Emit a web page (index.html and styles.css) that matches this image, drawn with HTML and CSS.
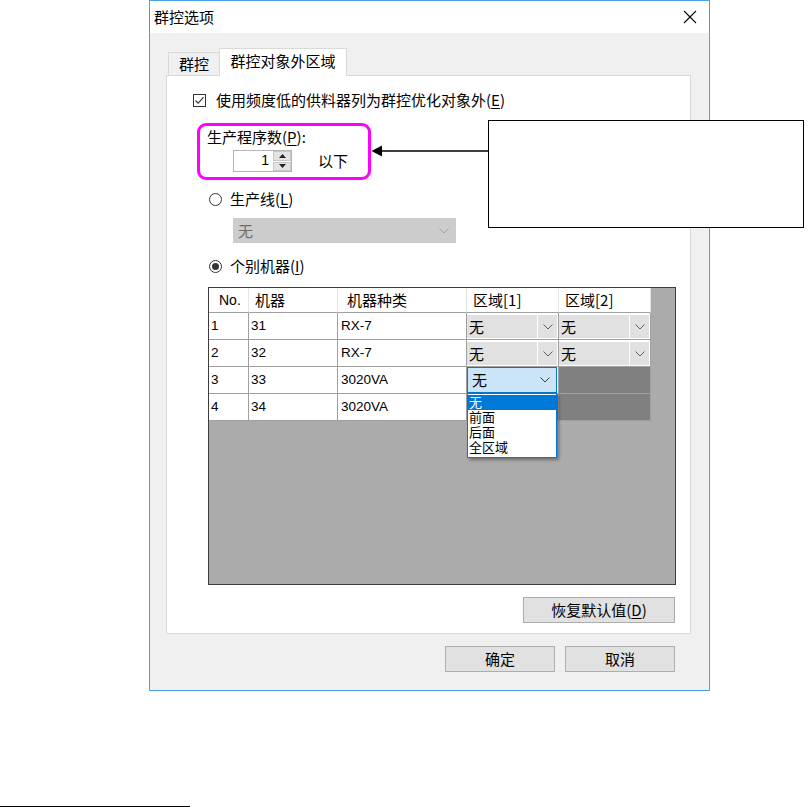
FILE: index.html
```html
<!DOCTYPE html>
<html lang="zh-CN">
<head>
<meta charset="utf-8">
<title>群控选项</title>
<link rel="stylesheet" href="styles.css">
</head>
<body>
<div class="page">
  <div class="window">
    <div class="titlebar">
      <span class="title">群控选项</span>
      <svg class="close" viewBox="0 0 14 14"><path d="M1 1 L13 13 M13 1 L1 13" stroke="#000" stroke-width="1.1" fill="none"/></svg>
    </div>
    <div class="client">
      <div class="tabs">
        <div class="tab">群控</div>
        <div class="tab active">群控对象外区域</div>
      </div>
      <div class="panel">
        <div class="chk-row">
          <svg class="checkbox" viewBox="0 0 13 13"><rect x="0.5" y="0.5" width="12" height="12" fill="#fff" stroke="#333"/><path d="M2.5 6.5 L5.2 9.2 L10.5 3.2" stroke="#333" stroke-width="1.1" fill="none"/></svg>
          <span>使用频度低的供料器列为群控优化对象外(<u>E</u>)</span>
        </div>
        <div class="group">
          <div class="label">生产程序数(<u>P</u>):</div>
          <div class="spin-row">
            <div class="spinner">
              <div class="spin-val">1</div>
              <div class="spin-btns">
                <div class="spin-btn"><svg viewBox="0 0 7 4"><path d="M3.5 0 L7 4 L0 4 Z" fill="#222"/></svg></div>
                <div class="spin-btn"><svg viewBox="0 0 7 4"><path d="M0 0 L7 0 L3.5 4 Z" fill="#222"/></svg></div>
              </div>
            </div>
            <span class="below">以下</span>
          </div>
        </div>
        <div class="radio-row first">
          <span class="radio"></span>
          <span>生产线(<u>L</u>)</span>
        </div>
        <div class="combo-disabled">
          <span>无</span>
          <svg class="chev" viewBox="0 0 10 6"><path d="M0.5 0.5 L5 5 L9.5 0.5" stroke="#a0a0a0" fill="none"/></svg>
        </div>
        <div class="radio-row second">
          <span class="radio on"></span>
          <span>个别机器(<u>I</u>)</span>
        </div>
        <div class="grid">
          <div class="row head">
            <div class="cell c-no hno">No.</div>
            <div class="cell c-m">机器</div>
            <div class="cell c-t">机器种类</div>
            <div class="cell c-a">区域[1]</div>
            <div class="cell c-b">区域[2]</div>
          </div>
          <div class="row">
            <div class="cell c-no">1</div>
            <div class="cell c-m">31</div>
            <div class="cell c-t">RX-7</div>
            <div class="cell c-a"><div class="combo"><span class="ctext">无</span><span class="carrow"><svg class="chev" viewBox="0 0 10 6"><path d="M0.5 0.5 L5 5 L9.5 0.5" stroke="#606060" fill="none"/></svg></span></div></div>
            <div class="cell c-b"><div class="combo"><span class="ctext">无</span><span class="carrow"><svg class="chev" viewBox="0 0 10 6"><path d="M0.5 0.5 L5 5 L9.5 0.5" stroke="#606060" fill="none"/></svg></span></div></div>
          </div>
          <div class="row">
            <div class="cell c-no">2</div>
            <div class="cell c-m">32</div>
            <div class="cell c-t">RX-7</div>
            <div class="cell c-a"><div class="combo"><span class="ctext">无</span><span class="carrow"><svg class="chev" viewBox="0 0 10 6"><path d="M0.5 0.5 L5 5 L9.5 0.5" stroke="#606060" fill="none"/></svg></span></div></div>
            <div class="cell c-b"><div class="combo"><span class="ctext">无</span><span class="carrow"><svg class="chev" viewBox="0 0 10 6"><path d="M0.5 0.5 L5 5 L9.5 0.5" stroke="#606060" fill="none"/></svg></span></div></div>
          </div>
          <div class="row">
            <div class="cell c-no">3</div>
            <div class="cell c-m">33</div>
            <div class="cell c-t">3020VA</div>
            <div class="cell c-a active-cell"><div class="combo-active"><span>无</span><svg class="chev" viewBox="0 0 10 6"><path d="M0.5 0.5 L5 5 L9.5 0.5" stroke="#404040" fill="none"/></svg></div></div>
            <div class="cell c-b dark"></div>
          </div>
          <div class="row">
            <div class="cell c-no">4</div>
            <div class="cell c-m">34</div>
            <div class="cell c-t">3020VA</div>
            <div class="cell c-a dark"></div>
            <div class="cell c-b dark"></div>
          </div>
          <div class="dropdown">
            <div class="item sel">无</div>
            <div class="item">前面</div>
            <div class="item">后面</div>
            <div class="item">全区域</div>
          </div>
        </div>
        <button class="btn restore">恢复默认值(<u>D</u>)</button>
      </div>
      <div class="buttons">
        <button class="btn">确定</button>
        <button class="btn">取消</button>
      </div>
    </div>
  </div>
  <div class="footline"></div>

  <div class="callout"></div>
  <svg class="arrow" viewBox="0 0 120 14" width="120" height="14"><path d="M1.5 7 L12 1.5 L12 12.5 Z" fill="#000"/><path d="M11 7 L119 7" stroke="#000" stroke-width="1.6"/></svg>
</div>
</body>
</html>
```

FILE: styles.css
```css
* { box-sizing: border-box; }
html, body { margin: 0; padding: 0; background: #fff; }
body {
  font-family: "Noto Sans CJK SC", "Noto Sans", sans-serif;
  font-size: 15px;
  color: #000;
}
u { text-decoration: underline; text-underline-offset: 2px; }

.page { position: relative; width: 812px; height: 807px; overflow: hidden; }

.window {
  margin-left: 149px;
  width: 561px;
  height: 691px;
  border: 1px solid #4aa0e6;
  display: flex;
  flex-direction: column;
}
.titlebar {
  height: 32px;
  background: #fff;
  display: flex;
  align-items: center;
  justify-content: space-between;
  padding: 0 12px 0 4px;
  line-height: 20px;
}
.close { width: 14px; height: 14px; display: block; }

.client {
  flex: 1;
  background: #f0f0f0;
  padding: 15px 18px 0 16px;
}
.tabs {
  display: flex;
  align-items: flex-end;
  height: 27px;
  padding-left: 2px;
  position: relative;
  z-index: 1;
}
.tab {
  width: 51px;
  height: 23px;
  border: 1px solid #d9d9d9;
  border-bottom: none;
  border-right: none;
  background: #f0f0f0;
  line-height: 22px;
  text-align: center;
}
.tab.active {
  width: 128px;
  height: 28px;
  margin-bottom: -1px;
  border-right: 1px solid #d9d9d9;
  background: #fff;
  line-height: 24px;
}
.panel {
  height: 559px;
  border: 1px solid #d9d9d9;
  background: #fff;
}

.chk-row {
  display: flex;
  align-items: center;
  height: 20px;
  line-height: 20px;
  margin: 14px 0 0 26px;
}
.checkbox { width: 13px; height: 13px; display: block; margin-right: 10px; }

.group {
  margin: 13px 0 0 30px;
  width: 174px;
  height: 57px;
  border: 3px solid #ff00ff;
  border-radius: 9px;
  padding: 1px 0 0 7px;
}
.label { line-height: 20px; height: 20px; }
.spin-row {
  display: flex;
  align-items: center;
  margin: 3px 0 0 26px;
}
.spinner {
  width: 59px;
  height: 22px;
  border: 1px solid #b4b4b4;
  background: #fff;
  display: flex;
}
.spin-val {
  flex: 1;
  text-align: right;
  padding-right: 3px;
  line-height: 19px;
  font-family: "Liberation Sans", sans-serif;
  font-size: 14px;
}
.spin-btns {
  width: 19px;
  display: flex;
  flex-direction: column;
  gap: 1px;
  padding: 0 0 0 1px;
  background: #fff;
}
.spin-btn {
  flex: 1;
  background: #e3e3e3;
  border: 1px solid #c8c8c8;
  display: flex;
  align-items: center;
  justify-content: center;
}
.spin-btn svg { width: 7px; height: 4px; display: block; }
.below { margin-left: 26px; line-height: 20px; }

.radio-row {
  display: flex;
  align-items: center;
  height: 20px;
  line-height: 20px;
  margin-left: 42px;
}
.radio-row.first { margin-top: 9px; }
.radio-row.second { margin-top: 13px; }
.radio {
  width: 13px;
  height: 13px;
  border: 1px solid #333;
  border-radius: 50%;
  margin-right: 8px;
  background: #fff;
  display: flex;
  align-items: center;
  justify-content: center;
}
.radio.on::after {
  content: "";
  width: 7px;
  height: 7px;
  border-radius: 50%;
  background: #333;
}

.combo-disabled {
  margin: 9px 0 0 66px;
  width: 223px;
  height: 25px;
  background: #cccccc;
  border: 1px solid #cccccc;
  color: #6d6d6d;
  display: flex;
  align-items: center;
  justify-content: space-between;
  padding: 0 6px 0 4px;
  line-height: 20px;
}
.chev { width: 10px; height: 6px; display: block; }

.grid {
  position: relative;
  margin: 11px 0 0 41px;
  width: 468px;
  height: 298px;
  border: 1px solid #3c3c3c;
  background: #ababab;
}
.row { display: flex; height: 27px; }
.row.head { height: 25px; }
.cell {
  height: 100%;
  background: #fff;
  border-right: 1px solid #a0a0a0;
  border-bottom: 1px solid #a0a0a0;
  display: flex;
  align-items: center;
  padding-left: 2px;
  font-family: "Liberation Sans", sans-serif;
  font-size: 13.5px;
  line-height: 16px;
}
.head .cell {
  font-family: "Noto Sans CJK SC", sans-serif;
  font-size: 15px;
  border-right-color: #e5e5e5;
  padding-left: 6px;
}
.head .cell.hno { padding-left: 10px; font-family: "Liberation Sans", sans-serif; font-size: 14px; }
.head .cell.c-t { padding-left: 9px; }
.c-no { width: 40px; }
.c-m { width: 89px; }
.c-t { width: 129px; padding-left: 3px; }
.c-a, .c-b { width: 92px; }
.row:not(.head) .c-a, .row:not(.head) .c-b { padding: 2px 1px 1px 0; align-items: stretch; }
.combo { flex: 1; display: flex; }
.ctext {
  flex: 1;
  background: #e1e1e1;
  padding-left: 2px;
  display: flex;
  align-items: center;
  font-family: "Noto Sans CJK SC", sans-serif;
  font-size: 15px;
}
.carrow {
  width: 19px;
  margin-left: 1px;
  background: #e1e1e1;
  display: flex;
  align-items: center;
  justify-content: center;
}
.row .cell.active-cell { padding: 0 1px 0 0; }
.combo-active {
  flex: 1;
  border: 1px solid #0078d7;
  background: #cce4f7;
  display: flex;
  align-items: center;
  justify-content: space-between;
  padding: 0 6px 0 4px;
  font-family: "Noto Sans CJK SC", sans-serif;
  font-size: 15px;
}
.row .cell.dark { background: #808080; border-bottom-color: #a0a0a0; }

.dropdown {
  position: absolute;
  left: 258px;
  top: 105px;
  width: 90px;
  height: 65px;
  background: #fff;
  border: 1px solid #0078d7;
  padding-top: 1px;
  box-shadow: 2px 2px 3px rgba(0, 0, 0, 0.35);
  z-index: 2;
}
.item {
  height: 15px;
  line-height: 15px;
  padding-left: 1px;
  font-family: "Liberation Sans", "Noto Sans CJK SC", sans-serif;
  font-size: 13px;
  overflow: hidden;
}
.item.sel { background: #0078d7; color: #fff; }

.btn {
  display: block;
  font-family: "Noto Sans CJK SC", sans-serif;
  font-size: 15px;
  line-height: 20px;
  color: #000;
  background: #e1e1e1;
  border: 1px solid #adadad;
  padding: 0;
  height: 26px;
}
.restore { margin: 12px 0 0 356px; width: 152px; }
.buttons {
  display: flex;
  justify-content: flex-end;
  gap: 10px;
  margin-top: 12px;
  padding-right: 16px;
}
.buttons .btn { width: 110px; }

.footline {
  margin-top: 115px;
  width: 190px;
  height: 1px;
  background: #000;
}

.callout {
  position: absolute;
  left: 488px;
  top: 120px;
  width: 316px;
  height: 108px;
  border: 1px solid #000;
  background: #fff;
}
.arrow {
  position: absolute;
  left: 370px;
  top: 144px;
  display: block;
}
```
